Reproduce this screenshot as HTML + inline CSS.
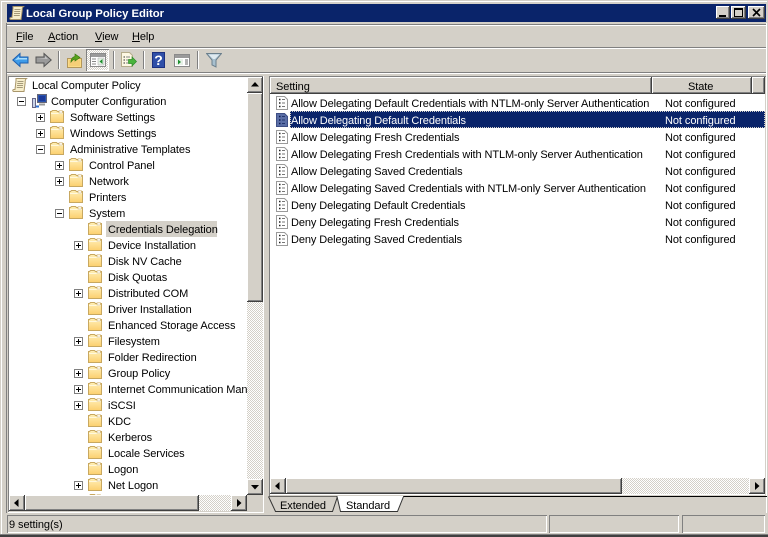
<!DOCTYPE html>
<html><head><meta charset="utf-8"><style>
html,body{margin:0;padding:0;background:#d4d0c8;}
#w{position:relative;width:768px;height:537px;overflow:hidden;background:#d4d0c8;font:11px/16px "Liberation Sans",sans-serif;letter-spacing:-.07px;color:#000;}
#w div,#w span.a,#w svg{position:absolute;}
.t{white-space:nowrap;}
.btn{background:#d4d0c8;box-shadow:inset -1px -1px 0 #404040,inset 1px 1px 0 #fff,inset -2px -2px 0 #808080;}
.chk{background:repeating-conic-gradient(#fff 0 25%,#d4d0c8 0 50%) 0 0/2px 2px;}
.sep{width:1px;height:18px;top:51px;background:#808080;box-shadow:1px 0 0 #fff;}
u{text-decoration:underline;}
.tree .t{height:16px;margin-top:1px;}
.row{left:291px;width:470px;height:17px;line-height:17px;margin-top:1px;letter-spacing:-.1px;}
.st{left:665px;height:17px;line-height:17px;white-space:nowrap;margin-top:1px;}
.sb{top:515px;height:18px;box-shadow:inset 1px 1px 0 #808080,inset -1px -1px 0 #fff;}
</style></head><body><div id="w">
<svg width="0" height="0" style="left:0;top:0"><defs>
<linearGradient id="fg" x1="0" y1="0" x2="0" y2="1"><stop offset="0" stop-color="#fff0b8"/><stop offset="1" stop-color="#fccf6e"/></linearGradient>
<symbol id="f" viewBox="0 0 16 16"><path d="M1.500 13.500V2.500h1l1-1h4l1 1h6v11z" fill="url(#fg)" stroke="#c8a860"/><path d="M2 4.500h12" stroke="#fff8dc"/><path d="M10 1.800h3.500v2.200H10z" fill="#fff" stroke="#c8a860" stroke-width=".6"/></symbol>
<symbol id="d" viewBox="0 0 16 16"><path d="M2.500 1.500h8l3 3v10h-11z" fill="#fff" stroke="#9a9a9a"/><path d="M5 4.500h1.500M5 8h1.500M5 11.500h1.500" stroke="#222" stroke-width="1.400"/><path d="M8 4.500h3M8 8h3M8 11.500h3" stroke="#777"/></symbol>
<symbol id="s" viewBox="0 0 16 16"><path d="M2.500 1.500h8l3 3v10h-11z" fill="#5a6ea6" stroke="#3e4f86"/><path d="M5 4.500h1.500M5 8h1.500M5 11.500h1.500" stroke="#0a1a50" stroke-width="1.400"/><path d="M8 4.500h3M8 8h3M8 11.500h3" stroke="#23366e"/></symbol>
<symbol id="sc" viewBox="0 0 16 16"><path d="M4 1.500h10.500c-1.300 1-1.500 2-1.300 4l-1.200 9H2c-1.300 0-2-2 0-2h1l1-9c0-1 0-2 0-2z" fill="#f7eecb" stroke="#a9966a"/><path d="M5.500 4.500h6M5.200 6.500h6M5 8.500h6M4.800 10.500h6" stroke="#8b7f60" stroke-width=".8"/></symbol>
<symbol id="p" viewBox="0 0 9 9"><path d="M.5.500h8v8h-8z" fill="#fff" stroke="#808080"/><path d="M2 4.500h5M4.500 2v5" stroke="#000"/></symbol>
<symbol id="m" viewBox="0 0 9 9"><path d="M.5.500h8v8h-8z" fill="#fff" stroke="#808080"/><path d="M2 4.500h5" stroke="#000"/></symbol>
</defs></svg>

<!-- window frame -->
<div style="left:1px;top:1px;width:766px;height:1px;background:#fff"></div>
<div style="left:1px;top:1px;width:1px;height:533px;background:#fff"></div>
<div style="left:0;top:534px;width:768px;height:1px;background:#808080"></div>
<div style="left:0;top:535px;width:768px;height:2px;background:#404040"></div>
<div style="left:6px;top:23px;width:1px;height:490px;background:#808080"></div>
<div style="left:766px;top:23px;width:1px;height:490px;background:#fff"></div>

<!-- title -->
<div style="left:7px;top:4px;width:759px;height:18px;background:#0a246a"></div>
<svg style="left:9px;top:5px" width="16" height="16"><use href="#sc"/></svg>
<div class="t" style="left:26px;top:6px;color:#fff;font-weight:bold;font-size:11.300px;letter-spacing:-.03px">Local Group Policy Editor</div>
<div class="btn" style="left:716px;top:6px;width:14px;height:13px"></div><div style="left:719px;top:15px;width:7px;height:2px;background:#000"></div>
<div class="btn" style="left:731px;top:6px;width:15px;height:13px"></div><div style="left:734px;top:8px;width:9px;height:9px;box-sizing:border-box;border:1px solid #000;border-top-width:2px"></div>
<div class="btn" style="left:748px;top:6px;width:17px;height:13px"></div>
<svg style="left:752px;top:8px" width="9" height="9"><path d="M1 1l7 7M8 1L1 8" stroke="#000" stroke-width="1.600"/></svg>

<!-- bands -->
<div style="left:7px;top:24px;width:759px;height:1px;background:#808080"></div>
<div style="left:7px;top:25px;width:759px;height:1px;background:#fff"></div>
<div style="left:7px;top:47px;width:759px;height:1px;background:#808080"></div>
<div style="left:7px;top:48px;width:759px;height:1px;background:#fff"></div>
<div style="left:7px;top:72px;width:759px;height:1px;background:#808080"></div>
<div style="left:7px;top:73px;width:759px;height:1px;background:#fff"></div>

<!-- menu -->
<div class="t" style="left:16px;top:29px"><u>F</u>ile</div>
<div class="t" style="left:48px;top:29px"><u>A</u>ction</div>
<div class="t" style="left:95px;top:29px"><u>V</u>iew</div>
<div class="t" style="left:132px;top:29px"><u>H</u>elp</div>

<!-- toolbar -->
<svg style="left:12px;top:52px" width="17" height="16"><path d="M.8 8L8 1.500V5h8v6H8v3.500z" fill="#3f9be8" stroke="#1d5fb0"/><path d="M3 8l4-3.500V6h8v1.500H7z" fill="#a9ddfb"/></svg>
<svg style="left:35px;top:52px" width="17" height="16"><path d="M16.200 8L9 1.500V5H1v6h8v3.500z" fill="#9a9a9a" stroke="#555"/><path d="M2 6h8V4l3 3z" fill="#c8c8c8"/></svg>
<div class="sep" style="left:58px"></div>
<svg style="left:67px;top:52px" width="15" height="16"><path d="M.5 6.500h14v9H.5z" fill="#fbdc88" stroke="#b4975a"/><path d="M2 8h11v6H2z" fill="#f5cf78"/><path d="M4 10c0-4 2-5 4-5.500V2l5 3.500-5 3.500V7C6 7.500 5 8.500 4 10z" fill="#5aa51e" stroke="#3b7a10" stroke-width=".7"/></svg>
<div class="chk" style="left:86px;top:49px;width:23px;height:22px;box-shadow:inset 1px 1px 0 #808080,inset -1px -1px 0 #fff"></div>
<svg style="left:90px;top:52px" width="16" height="16"><path d="M.5 1.500h15v13H.5z" fill="#fff" stroke="#8a8a8a"/><path d="M1 2h14v3H1z" fill="#9a9a9a"/><path d="M2 7h4M2 9.500h4M2 12h4" stroke="#888"/><path d="M8 6h6v7H8z" fill="#e6f0e6" stroke="#aaa" stroke-width=".5"/><path d="M12.500 7v5L9.500 9.500z" fill="#1f8f2f"/></svg>
<div class="sep" style="left:113px"></div>
<svg style="left:120px;top:52px" width="17" height="16"><path d="M1.500.500h8l3 3v11h-11z" fill="#fdf8e4" stroke="#b5ac8c"/><path d="M3.500 5h1.500M3.500 8h1.500M3.500 11h1.500" stroke="#333"/><path d="M6 5h4M6 8h2M6 11h2" stroke="#888"/><path d="M8.500 7.500h3.500V5l4.500 4.500L12 14v-2.500H8.500z" fill="#49b43c" stroke="#2d8a2a" stroke-width=".7"/></svg>
<div class="sep" style="left:143px"></div>
<div style="left:152px;top:52px;width:13px;height:16px;background:#2f4fa8;box-shadow:inset 0 0 0 1px #1c3080"></div>
<div style="left:152px;top:52px;width:13px;height:16px;color:#fff;text-align:center;font:bold 14px/16px 'Liberation Sans',sans-serif">?</div>
<svg style="left:174px;top:52px" width="16" height="16"><path d="M.5 2.500h15v12H.5z" fill="#fff" stroke="#8a8a8a"/><path d="M1 3h14v3H1z" fill="#9a9a9a"/><path d="M2 7h7v6H2z" fill="#e6f0e6"/><path d="M4 7.500v5l3-2.500z" fill="#1f8f2f"/><path d="M11 8h3M11 10h3M11 12h3" stroke="#666"/></svg>
<div class="sep" style="left:197px"></div>
<svg style="left:206px;top:52px" width="16" height="16"><path d="M.5 1.500h15L10 8v7l-4-2V8z" fill="#a8c0cf" stroke="#6b7f8c"/><path d="M2.500 2.500h11L9 7H7z" fill="#dfeaf0"/></svg>

<!-- tree pane -->
<div style="left:8px;top:76px;width:256px;height:1px;background:#808080"></div>
<div style="left:8px;top:76px;width:1px;height:436px;background:#808080"></div>
<div style="left:8px;top:512px;width:256px;height:1px;background:#fff"></div>
<div style="left:263px;top:76px;width:1px;height:437px;background:#fff"></div>
<div class="tree" style="left:9px;top:77px;width:238px;height:418px;background:#fff;overflow:hidden">
<svg style="left:3px;top:0" width="16" height="16"><use href="#sc"/></svg><div class="t" style="left:23px;top:0">Local Computer Policy</div>
<svg style="left:8px;top:20px" width="9" height="9"><use href="#m"/></svg>
<svg style="left:22px;top:16px" width="16" height="16"><path d="M6.500 1.500h9v8h-9z" fill="#2a55b0" stroke="#667"/><path d="M8 3h6v5H8z" fill="#1b3a9a"/><path d="M8 11.500h6" stroke="#999" stroke-width="2"/><path d="M1.500 5.500h3v9h-3z" fill="#c9d3e8" stroke="#668"/><path d="M5 13.500h3" stroke="#2c6fd0" stroke-width="2"/></svg>
<div class="t" style="left:42px;top:16px">Computer Configuration</div>

<svg style="left:27px;top:36px" width="9" height="9"><use href="#p"/></svg><svg style="left:40px;top:32px" width="16" height="16"><use href="#f"/></svg><div class="t" style="left:61px;top:32px">Software Settings</div>
<svg style="left:27px;top:52px" width="9" height="9"><use href="#p"/></svg><svg style="left:40px;top:48px" width="16" height="16"><use href="#f"/></svg><div class="t" style="left:61px;top:48px">Windows Settings</div>
<svg style="left:27px;top:68px" width="9" height="9"><use href="#m"/></svg><svg style="left:40px;top:64px" width="16" height="16"><use href="#f"/></svg><div class="t" style="left:61px;top:64px">Administrative Templates</div>

<svg style="left:46px;top:84px" width="9" height="9"><use href="#p"/></svg><svg style="left:59px;top:80px" width="16" height="16"><use href="#f"/></svg><div class="t" style="left:80px;top:80px">Control Panel</div>
<svg style="left:46px;top:100px" width="9" height="9"><use href="#p"/></svg><svg style="left:59px;top:96px" width="16" height="16"><use href="#f"/></svg><div class="t" style="left:80px;top:96px">Network</div>
<svg style="left:59px;top:112px" width="16" height="16"><use href="#f"/></svg><div class="t" style="left:80px;top:112px">Printers</div>
<svg style="left:46px;top:132px" width="9" height="9"><use href="#m"/></svg><svg style="left:59px;top:128px" width="16" height="16"><use href="#f"/></svg><div class="t" style="left:80px;top:128px">System</div>

<svg style="left:78px;top:144px" width="16" height="16"><use href="#f"/></svg><div style="left:97px;top:144px;width:111px;height:16px;background:#d4d0c8"></div><div class="t" style="left:99px;top:144px">Credentials Delegation</div>
<svg style="left:65px;top:164px" width="9" height="9"><use href="#p"/></svg><svg style="left:78px;top:160px" width="16" height="16"><use href="#f"/></svg><div class="t" style="left:99px;top:160px">Device Installation</div>
<svg style="left:78px;top:176px" width="16" height="16"><use href="#f"/></svg><div class="t" style="left:99px;top:176px">Disk NV Cache</div>
<svg style="left:78px;top:192px" width="16" height="16"><use href="#f"/></svg><div class="t" style="left:99px;top:192px">Disk Quotas</div>
<svg style="left:65px;top:212px" width="9" height="9"><use href="#p"/></svg><svg style="left:78px;top:208px" width="16" height="16"><use href="#f"/></svg><div class="t" style="left:99px;top:208px">Distributed COM</div>
<svg style="left:78px;top:224px" width="16" height="16"><use href="#f"/></svg><div class="t" style="left:99px;top:224px">Driver Installation</div>
<svg style="left:78px;top:240px" width="16" height="16"><use href="#f"/></svg><div class="t" style="left:99px;top:240px">Enhanced Storage Access</div>
<svg style="left:65px;top:260px" width="9" height="9"><use href="#p"/></svg><svg style="left:78px;top:256px" width="16" height="16"><use href="#f"/></svg><div class="t" style="left:99px;top:256px">Filesystem</div>
<svg style="left:78px;top:272px" width="16" height="16"><use href="#f"/></svg><div class="t" style="left:99px;top:272px">Folder Redirection</div>
<svg style="left:65px;top:292px" width="9" height="9"><use href="#p"/></svg><svg style="left:78px;top:288px" width="16" height="16"><use href="#f"/></svg><div class="t" style="left:99px;top:288px">Group Policy</div>
<svg style="left:65px;top:308px" width="9" height="9"><use href="#p"/></svg><svg style="left:78px;top:304px" width="16" height="16"><use href="#f"/></svg><div class="t" style="left:99px;top:304px">Internet Communication Management</div>
<svg style="left:65px;top:324px" width="9" height="9"><use href="#p"/></svg><svg style="left:78px;top:320px" width="16" height="16"><use href="#f"/></svg><div class="t" style="left:99px;top:320px">iSCSI</div>
<svg style="left:78px;top:336px" width="16" height="16"><use href="#f"/></svg><div class="t" style="left:99px;top:336px">KDC</div>
<svg style="left:78px;top:352px" width="16" height="16"><use href="#f"/></svg><div class="t" style="left:99px;top:352px">Kerberos</div>
<svg style="left:78px;top:368px" width="16" height="16"><use href="#f"/></svg><div class="t" style="left:99px;top:368px">Locale Services</div>
<svg style="left:78px;top:384px" width="16" height="16"><use href="#f"/></svg><div class="t" style="left:99px;top:384px">Logon</div>
<svg style="left:65px;top:404px" width="9" height="9"><use href="#p"/></svg><svg style="left:78px;top:400px" width="16" height="16"><use href="#f"/></svg><div class="t" style="left:99px;top:400px">Net Logon</div>
<svg style="left:78px;top:416px" width="16" height="16"><use href="#f"/></svg>
</div>

<!-- tree v scrollbar -->
<div class="chk" style="left:247px;top:77px;width:16px;height:418px"></div>
<div class="btn" style="left:247px;top:77px;width:16px;height:16px"></div>
<svg style="left:251px;top:82px" width="8" height="5"><path d="M4 0l4 4.500H0z"/></svg>
<div class="btn" style="left:247px;top:93px;width:16px;height:209px"></div>
<div class="btn" style="left:247px;top:479px;width:16px;height:16px"></div>
<svg style="left:251px;top:485px" width="8" height="5"><path d="M0 0h8L4 4.500z"/></svg>
<!-- tree h scrollbar -->
<div class="chk" style="left:9px;top:495px;width:238px;height:16px"></div>
<div class="btn" style="left:9px;top:495px;width:16px;height:16px"></div>
<svg style="left:14px;top:499px" width="5" height="8"><path d="M4.500 0v8L0 4z"/></svg>
<div class="btn" style="left:25px;top:495px;width:174px;height:16px"></div>
<div class="btn" style="left:231px;top:495px;width:16px;height:16px"></div>
<svg style="left:237px;top:499px" width="5" height="8"><path d="M0 0v8l4.500-4z"/></svg>

<!-- right pane -->
<div style="left:269px;top:76px;width:497px;height:1px;background:#808080"></div>
<div style="left:269px;top:76px;width:1px;height:420px;background:#808080"></div>
<div style="left:270px;top:77px;width:495px;height:418px;background:#fff"></div>
<div style="left:766px;top:76px;width:1px;height:437px;background:#fff"></div>
<div style="left:269px;top:496px;width:498px;height:1px;background:#000"></div>
<!-- header -->
<div class="btn" style="left:270px;top:77px;width:382px;height:17px"></div>
<div class="btn" style="left:652px;top:77px;width:100px;height:17px"></div>
<div class="btn" style="left:752px;top:77px;width:13px;height:17px"></div>
<div class="t" style="left:276px;top:79px">Setting</div>
<div class="t" style="left:688px;top:79px">State</div>
<!-- rows -->
<div style="left:290px;top:111px;width:475px;height:17px;background:#0a246a;outline:1px dotted #d4d0c8;outline-offset:-1px"></div>
<svg style="left:274px;top:95px" width="16" height="16"><use href="#d"/></svg><div class="t row" style="top:95px">Allow Delegating Default Credentials with NTLM-only Server Authentication</div><div class="st" style="top:95px">Not configured</div>
<svg style="left:274px;top:112px" width="16" height="16"><use href="#s"/></svg><div class="t row" style="top:112px;color:#fff">Allow Delegating Default Credentials</div><div class="st" style="top:112px;color:#fff">Not configured</div>
<svg style="left:274px;top:129px" width="16" height="16"><use href="#d"/></svg><div class="t row" style="top:129px">Allow Delegating Fresh Credentials</div><div class="st" style="top:129px">Not configured</div>
<svg style="left:274px;top:146px" width="16" height="16"><use href="#d"/></svg><div class="t row" style="top:146px">Allow Delegating Fresh Credentials with NTLM-only Server Authentication</div><div class="st" style="top:146px">Not configured</div>
<svg style="left:274px;top:163px" width="16" height="16"><use href="#d"/></svg><div class="t row" style="top:163px">Allow Delegating Saved Credentials</div><div class="st" style="top:163px">Not configured</div>
<svg style="left:274px;top:180px" width="16" height="16"><use href="#d"/></svg><div class="t row" style="top:180px">Allow Delegating Saved Credentials with NTLM-only Server Authentication</div><div class="st" style="top:180px">Not configured</div>
<svg style="left:274px;top:197px" width="16" height="16"><use href="#d"/></svg><div class="t row" style="top:197px">Deny Delegating Default Credentials</div><div class="st" style="top:197px">Not configured</div>
<svg style="left:274px;top:214px" width="16" height="16"><use href="#d"/></svg><div class="t row" style="top:214px">Deny Delegating Fresh Credentials</div><div class="st" style="top:214px">Not configured</div>
<svg style="left:274px;top:231px" width="16" height="16"><use href="#d"/></svg><div class="t row" style="top:231px">Deny Delegating Saved Credentials</div><div class="st" style="top:231px">Not configured</div>
<!-- right h scrollbar -->
<div class="chk" style="left:270px;top:478px;width:495px;height:16px"></div>
<div class="btn" style="left:270px;top:478px;width:16px;height:16px"></div>
<svg style="left:275px;top:482px" width="5" height="8"><path d="M4.500 0v8L0 4z"/></svg>
<div class="btn" style="left:286px;top:478px;width:336px;height:16px"></div>
<div class="btn" style="left:749px;top:478px;width:16px;height:16px"></div>
<svg style="left:755px;top:482px" width="5" height="8"><path d="M0 0v8l4.500-4z"/></svg>
<!-- tabs -->
<svg style="left:266px;top:496px" width="145" height="18">
<path d="M2.500 0.500L9.500 15.500H66.500L71.500 0.500" fill="#d4d0c8" stroke="#333"/>
<path d="M71 0.500L74.500 15.500H131.500L137.500 0.500z" fill="#fff" stroke="#333"/>
<path d="M71.500 0.500H137" stroke="#fff"/>
</svg>
<div class="t" style="left:280px;top:498px">Extended</div>
<div class="t" style="left:346px;top:498px">Standard</div>

<!-- status bar -->
<div class="sb" style="left:7px;width:540px"></div>
<div class="sb" style="left:549px;width:130px"></div>
<div class="sb" style="left:682px;width:83px"></div>
<div class="t" style="left:9px;top:517px">9 setting(s)</div>
</div></body></html>
